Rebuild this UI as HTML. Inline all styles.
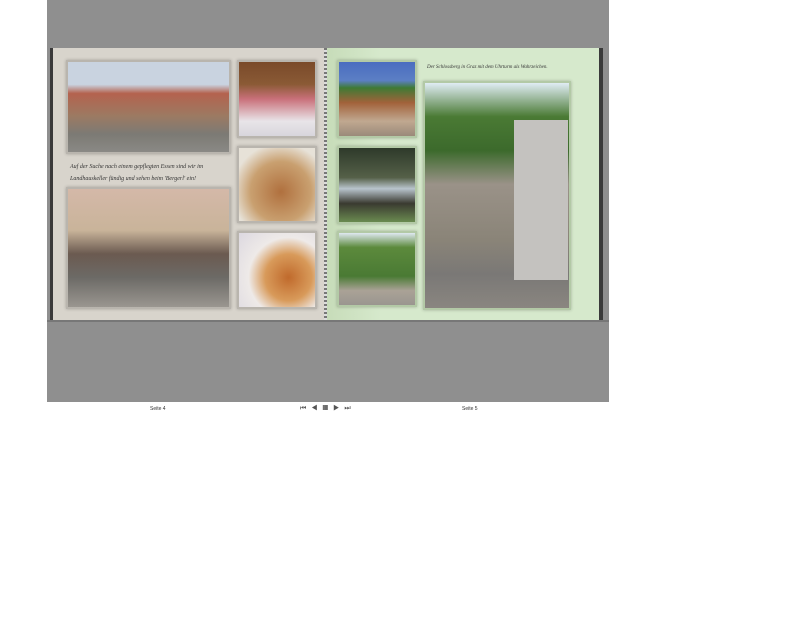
<!DOCTYPE html><html><head><style>
body{margin:0;width:800px;height:640px;background:#fff;position:relative;overflow:hidden;font-family:"Liberation Sans",sans-serif}
div{position:absolute;box-sizing:border-box}
.ph{border:2px solid #b9b5ae;box-shadow:0 0 3px rgba(0,0,0,.25)}
.g{border-color:#b3c9a6}
</style></head><body>
<div style="left:47px;top:0;width:562px;height:402px;background:#8f8f8f"></div>
<div style="left:50px;top:48px;width:277px;height:273px;background:#d8d4cc;border-left:3px solid #3a3a3a"></div>
<div style="left:324px;top:48px;width:3px;height:273px;background:repeating-linear-gradient(#777 0 2px,#ddd 2px 4px)"></div>
<div style="left:327px;top:48px;width:276px;height:273px;background:linear-gradient(90deg,#c7dcb9,#d6e9cc 20%,#d6e9cc);border-right:4px solid #3a3a3a"></div>
<div style="left:47px;top:320px;width:562px;height:2px;background:#777"></div>

<div class="ph" style="left:66px;top:60px;width:165px;height:94px;background:linear-gradient(180deg,#c9d3e0 0,#c9d3e0 25%,#b4624e 35%,#9c7a62 60%,#7c7a74 80%,#8a8985 100%)"></div>
<div class="ph" style="left:237px;top:60px;width:80px;height:78px;background:linear-gradient(180deg,#7a4a2a 0,#8a5a35 30%,#c9707a 50%,#e8e4e8 80%,#d8d6dc 100%)"></div>
<div class="ph" style="left:237px;top:146px;width:80px;height:77px;background:radial-gradient(circle at 55% 60%,#b0703e,#c9a070 50%,#e7e2d8 80%)"></div>
<div class="ph" style="left:237px;top:231px;width:80px;height:78px;background:radial-gradient(circle at 65% 60%,#c06a2c,#d89a5a 35%,#eeeae8 60%,#dcd8e0)"></div>
<div class="ph" style="left:66px;top:187px;width:165px;height:122px;background:linear-gradient(180deg,#d4b8a8 0,#c9b49a 35%,#6b5a50 55%,#6c6a66 75%,#9a9690 100%)"></div>
<div style="left:70px;top:161px;font:italic 6px 'Liberation Serif',serif;color:#333;width:160px;line-height:12px">Auf der Suche nach einem gepflegten Essen sind wir im Landhauskeller fündig und sehen beim 'Bergerl' ein!</div>

<div class="ph g" style="left:337px;top:60px;width:80px;height:78px;background:linear-gradient(180deg,#4a6cc0 0,#5c7fc4 25%,#3f7a34 35%,#a2623a 55%,#c0a890 80%,#9a8a7a)"></div>
<div class="ph g" style="left:337px;top:146px;width:80px;height:78px;background:linear-gradient(180deg,#2e3a2a 0,#556048 40%,#b8c4cc 55%,#3a3a30 75%,#6a8a50 100%)"></div>
<div class="ph g" style="left:337px;top:231px;width:80px;height:76px;background:linear-gradient(180deg,#dfe8f0 0,#5c8a3c 20%,#4a7a34 60%,#aaa296 80%,#9a9690)"></div>
<div class="ph g" style="left:423px;top:81px;width:148px;height:229px;background:linear-gradient(180deg,#e0ecf4 0,#4a7a34 15%,#3c6a2c 30%,#9a9288 45%,#8a8478 70%,#7a7876 85%,#8a8680 100%)"></div>
<div style="left:514px;top:120px;width:54px;height:160px;background:#c4c2bf"></div>
<div style="left:427px;top:65px;font:italic 5px 'Liberation Serif',serif;color:#333">Der Schlossberg in Graz mit dem Uhrturm als Wahrzeichen.</div>

<div style="left:150px;top:406px;font-size:5px;color:#333">Seite 4</div>
<div style="left:462px;top:406px;font-size:5px;color:#333">Seite 5</div>
<div style="left:300px;top:405px;font-size:7px;color:#555;letter-spacing:5px">⏮◀<span style="color:#444">▦</span>▶⏭</div>
</body></html>
